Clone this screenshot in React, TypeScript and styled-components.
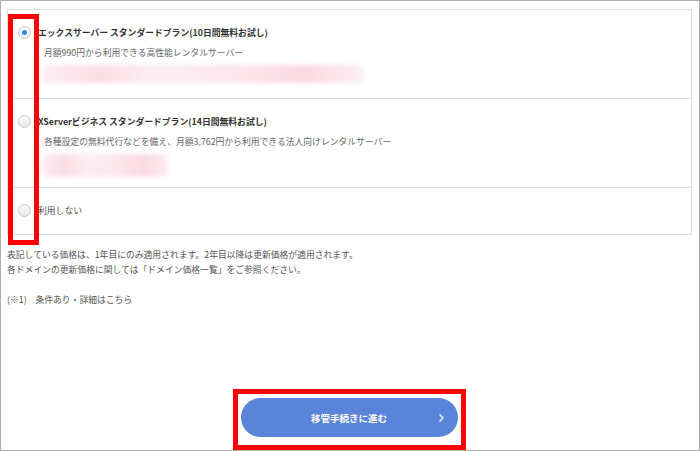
import React from 'react';
import styled, { createGlobalStyle } from 'styled-components';

type Plan = {
  id: string;
  title: string;
  describe?: string;
  blurWidth?: number;
  blurHeight?: number;
  height: number;
  checked?: boolean;
  bold?: boolean;
};

const plans: Plan[] = [
  {
    id: 'x',
    title: 'エックスサーバー スタンダードプラン(10日間無料お試し)',
    describe: '月額990円から利用できる高性能レンタルサーバー',
    blurWidth: 321,
    blurHeight: 18,
    height: 89,
    checked: true,
    bold: true,
  },
  {
    id: 'biz',
    title: 'XServerビジネス スタンダードプラン(14日間無料お試し)',
    describe: '各種設定の無料代行などを備え、月額3,762円から利用できる法人向けレンタルサーバー',
    blurWidth: 126,
    blurHeight: 23,
    height: 89,
    bold: true,
  },
  { id: 'none', title: '利用しない', height: 46 },
];

const GlobalStyle = createGlobalStyle`
  html, body {
    margin: 0;
    padding: 0;
    background: #fff;
  }
  body {
    font-family: 'Noto Sans CJK JP', 'Noto Sans', sans-serif;
    -webkit-font-smoothing: antialiased;
  }
`;

const Frame = styled.div`
  position: relative;
  box-sizing: border-box;
  width: 700px;
  height: 451px;
  border: 1px solid #adadad;
  padding: 8px 7px 0 6px;
  overflow: hidden;
`;

const PlanList = styled.div`
  border: 1px solid #dedede;
`;

const PlanRow = styled.label<{ $height: number }>`
  display: flex;
  align-items: flex-start;
  box-sizing: border-box;
  height: ${(p) => p.$height}px;
  padding: 15px 10px 0 10px;
  border-bottom: 1px solid #dedede;

  &:last-child {
    border-bottom: none;
  }
`;

const Radio = styled.span<{ $checked?: boolean }>`
  flex: none;
  position: relative;
  box-sizing: border-box;
  width: 13px;
  height: 13px;
  margin-top: 1px;
  border-radius: 50%;
  border: 1px solid #c9c9c9;
  background: linear-gradient(#fbfbfb, #e9e9e9);

  &::after {
    content: '';
    display: ${(p) => (p.$checked ? 'block' : 'none')};
    position: absolute;
    left: 3px;
    top: 3px;
    width: 5px;
    height: 5px;
    border-radius: 50%;
    background: #2a8ded;
  }
`;

const PlanBody = styled.div`
  display: flex;
  flex-direction: column;
  margin-left: 7px;
`;

const PlanTitle = styled.div<{ $bold?: boolean }>`
  font-size: 8.8px;
  line-height: 15px;
  font-weight: ${(p) => (p.$bold ? 700 : 400)};
  color: ${(p) => (p.$bold ? '#333' : '#555')};
  white-space: nowrap;
`;

const PlanDescribe = styled.div`
  margin: 6px 0 0 6px;
  font-size: 8.8px;
  line-height: 14px;
  color: #666;
  white-space: nowrap;
`;

const Blurred = styled.div`
  margin: 5px 0 0 4px;
  border-radius: 4px;
  background: linear-gradient(
    90deg,
    #fdeef2 0%,
    #fbdde5 18%,
    #fdeef2 35%,
    #fce6ec 60%,
    #fbd9e2 82%,
    #fdeef2 100%
  );
  filter: blur(2px);
`;

const Notes = styled.div`
  margin-top: 12px;
  font-size: 8.8px;
  line-height: 15px;
  color: #555;
`;

const Spacer = styled.div`
  height: 15px;
`;

const Footer = styled.div`
  display: flex;
  justify-content: center;
  margin-top: 91px;
  padding-right: 1px;
`;

const NextButton = styled.button`
  display: flex;
  align-items: center;
  justify-content: center;
  position: relative;
  width: 217px;
  height: 39px;
  border: none;
  border-radius: 20px;
  background: #5a84d9;
  color: #fff;
  font-family: inherit;
  font-size: 9.5px;
  font-weight: 700;
  cursor: pointer;

  svg {
    position: absolute;
    right: 14px;
    top: 16px;
  }
`;

const Highlight = styled.div<{ $left: number; $top: number; $w: number; $h: number }>`
  position: absolute;
  box-sizing: border-box;
  left: ${(p) => p.$left}px;
  top: ${(p) => p.$top}px;
  width: ${(p) => p.$w}px;
  height: ${(p) => p.$h}px;
  border: 5px solid #ff0000;
  pointer-events: none;
`;

const App = () => (
  <>
    <GlobalStyle />
    <Frame>
      <PlanList>
        {plans.map((plan) => (
          <PlanRow key={plan.id} $height={plan.height}>
            <Radio $checked={plan.checked} />
            <PlanBody>
              <PlanTitle $bold={plan.bold}>{plan.title}</PlanTitle>
              {plan.describe && <PlanDescribe>{plan.describe}</PlanDescribe>}
              {plan.blurWidth && (
                <Blurred style={{ width: plan.blurWidth, height: plan.blurHeight }} />
              )}
            </PlanBody>
          </PlanRow>
        ))}
      </PlanList>

      <Notes>
        <div>表記している価格は、1年目にのみ適用されます。2年目以降は更新価格が適用されます。</div>
        <div>各ドメインの更新価格に関しては「ドメイン価格一覧」をご参照ください。</div>
        <Spacer />
        <div>(※1)　条件あり・詳細はこちら</div>
      </Notes>

      <Footer>
        <NextButton type="button">
          移管手続きに進む
          <svg width="5" height="8" viewBox="0 0 5 8" fill="none">
            <path d="M1 1l3 3-3 3" stroke="#fff" strokeWidth="1.3" strokeLinecap="round" strokeLinejoin="round" />
          </svg>
        </NextButton>
      </Footer>

      <Highlight $left={7} $top={13} $w={31} $h={231} />
      <Highlight $left={232} $top={388} $w={233} $h={61} />
    </Frame>
  </>
);

export default App;
